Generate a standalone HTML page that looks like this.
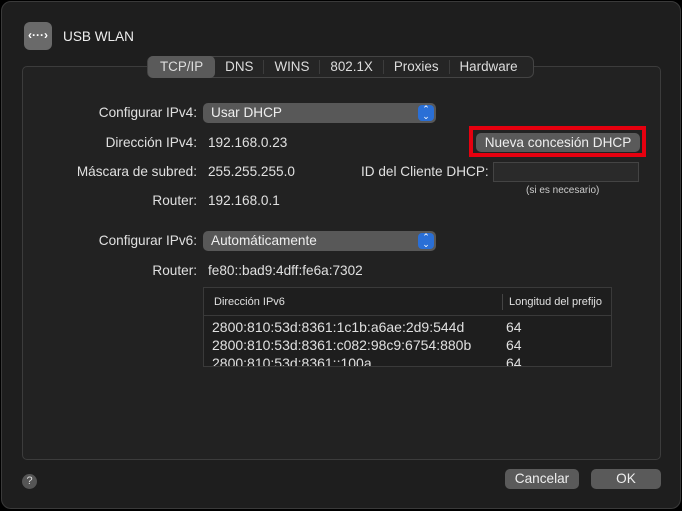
<html><head><style>
*{margin:0;padding:0;box-sizing:border-box}
body{width:682px;height:511px;background:#000;font-family:"Liberation Sans",sans-serif;color:#e0e0e0;font-size:13.6px;position:relative;overflow:hidden}
.win{position:absolute;left:1px;top:1px;width:680px;height:508px;background:#1e1e1e;border-radius:10px;border:1px solid #3a3a3a}
.a{position:absolute;white-space:nowrap}
.r{text-align:right}
.panel{position:absolute;left:22px;top:66px;width:639px;height:394px;border:1px solid #3c3c3c;border-radius:5px;background:#222}
.tabs{position:absolute;left:147px;top:56px;width:387px;height:22px;border:1px solid #444;border-radius:6px;background:#252525;display:flex;align-items:center}
.tabs span{padding:0 10px;color:#ddd;font-size:13.4px;border-right:1px solid #3c3c3c;line-height:14px}
.tabs span:last-child{border-right:none}
.tabs span.sel{background:#5a5a5a;border-radius:5px;line-height:22px;border-right:none;height:22px;padding:0 12px}
.pop{position:absolute;height:20px;background:#585858;border-radius:5px;padding-left:8px;line-height:20px;color:#eee}
.pop i{position:absolute;right:2px;top:2px;width:16px;height:16px;background:#2a6fd6;border-radius:4px;color:#fff;font-style:normal;font-size:9px;line-height:7px;text-align:center;padding-top:1px}
.btn{position:absolute;background:#5a5a5a;border-radius:5px;text-align:center;color:#eee}
</style></head><body>
<div class="win">
<div class="a" style="left:22px;top:20px;width:28px;height:28px;background:#6a6a6a;border-radius:6px;color:#fff;font-size:12px;line-height:27px;text-align:center;font-weight:bold">‹···›</div>
<div class="a" style="left:61px;top:27px;font-size:13.6px;color:#eee">USB WLAN</div>
</div>
<div class="panel"></div>
<div class="tabs"><span class="sel">TCP/IP</span><span>DNS</span><span>WINS</span><span>802.1X</span><span>Proxies</span><span style="border:none">Hardware</span></div>

<div class="a r" style="right:485px;top:105px">Configurar IPv4:</div>
<div class="pop" style="left:203px;top:103px;width:233px">Usar DHCP<i>⌃<br>⌄</i></div>
<div class="a r" style="right:485px;top:135px">Dirección IPv4:</div>
<div class="a" style="left:208px;top:135px">192.168.0.23</div>
<div class="a" style="left:469px;top:126px;width:177px;height:31px;border:4px solid #e6000f"></div>
<div class="btn" style="left:476px;top:133px;width:164px;height:19px;line-height:19px">Nueva concesión DHCP</div>
<div class="a r" style="right:485px;top:164px">Máscara de subred:</div>
<div class="a" style="left:208px;top:164px">255.255.255.0</div>
<div class="a" style="left:361px;top:164px">ID del Cliente DHCP:</div>
<div class="a" style="left:493px;top:162px;width:146px;height:20px;background:#2a2a2a;border:1px solid #444"></div>
<div class="a" style="left:526px;top:185px;font-size:10px;color:#ccc">(si es necesario)</div>
<div class="a r" style="right:485px;top:193px">Router:</div>
<div class="a" style="left:208px;top:193px">192.168.0.1</div>

<div class="a r" style="right:485px;top:233px">Configurar IPv6:</div>
<div class="pop" style="left:203px;top:231px;width:233px">Automáticamente<i>⌃<br>⌄</i></div>
<div class="a r" style="right:485px;top:263px">Router:</div>
<div class="a" style="left:208px;top:263px">fe80::bad9:4dff:fe6a:7302</div>

<div class="a" style="left:203px;top:287px;width:409px;height:80px;background:#1e1e1e;border:1px solid #3a3a3a;overflow:hidden">
<div style="height:28px;border-bottom:1px solid #3a3a3a;position:relative;font-size:11px">
<div class="a" style="left:10px;top:8px">Dirección IPv6</div>
<div class="a" style="left:298px;top:6px;width:1px;height:16px;background:#444"></div>
<div class="a" style="left:305px;top:8px">Longitud del prefijo</div>
</div>
<div class="a" style="left:8px;top:30px;line-height:18px;font-size:14px">2800:810:53d:8361:1c1b:a6ae:2d9:544d<br>2800:810:53d:8361:c082:98c9:6754:880b<br>2800:810:53d:8361::100a</div>
<div class="a" style="left:302px;top:30px;line-height:18px;font-size:14px">64<br>64<br>64</div>
</div>

<div class="a" style="left:22px;top:474px;width:15px;height:15px;border-radius:50%;background:#555;color:#ddd;font-size:11px;line-height:15px;text-align:center">?</div>
<div class="btn" style="left:505px;top:469px;width:74px;height:20px;line-height:20px">Cancelar</div>
<div class="btn" style="left:591px;top:469px;width:70px;height:20px;line-height:20px">OK</div>
</body></html>
